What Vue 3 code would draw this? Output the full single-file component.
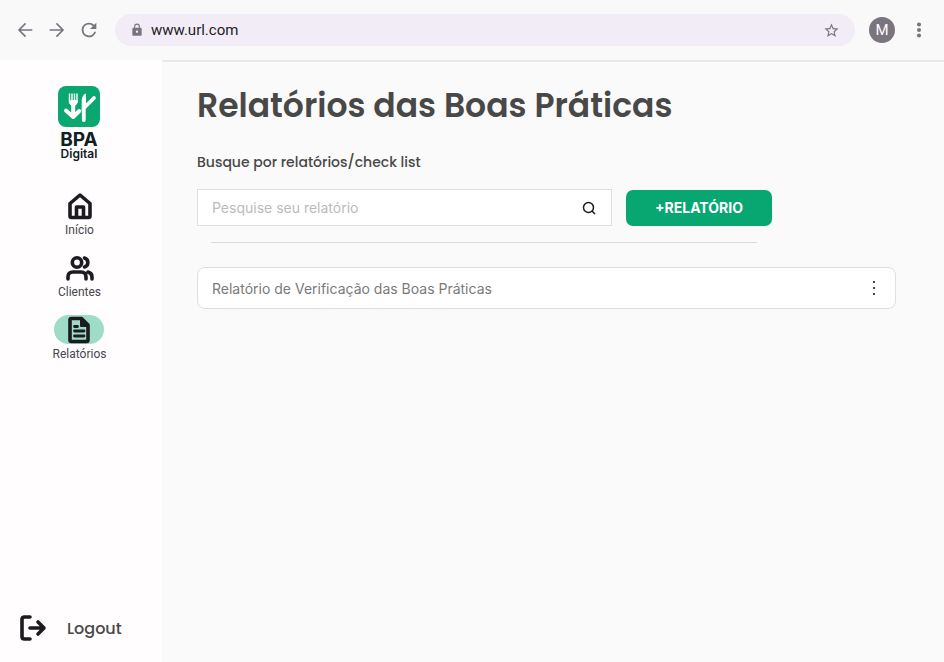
<script setup>
import { ref } from 'vue'

const url = ref('www.url.com')
const query = ref('')
const reports = ref(['Relatório de Verificação das Boas Práticas'])
</script>

<template>
  <div class="page">
    <header class="browser">
      <nav class="history" aria-label="Navegador">
        <button type="button" aria-label="Voltar">
          <svg width="22" height="22" viewBox="0 0 24 24"><path d="M20 11.200H7.500l5.700-5.700L12 4.200 4.200 12l7.800 7.800 1.200-1.300-5.700-5.700H20z" /></svg>
        </button>
        <button type="button" aria-label="Avançar">
          <svg width="22" height="22" viewBox="0 0 24 24"><path d="M4 11.200h12.500l-5.700-5.700L12 4.200l7.800 7.800-7.800 7.800-1.200-1.300 5.700-5.700H4z" /></svg>
        </button>
        <button type="button" aria-label="Recarregar">
          <svg width="22" height="22" viewBox="0 0 24 24"><path d="M17.65 6.35A7.96 7.96 0 0 0 12 4a8 8 0 1 0 7.73 10h-2.08A6 6 0 1 1 12 6c1.66 0 3.14.69 4.22 1.78L13 11h7V4z" /></svg>
        </button>
      </nav>
      <div class="address">
        <svg width="14" height="14" viewBox="0 0 24 24"><path d="M18 8h-1V6A5 5 0 0 0 7 6v2H6a2 2 0 0 0-2 2v10c0 1.100.9 2 2 2h12a2 2 0 0 0 2-2V10a2 2 0 0 0-2-2zm-6 9a2 2 0 1 1 0-4 2 2 0 0 1 0 4zM8.900 8V6a3.100 3.100 0 0 1 6.200 0v2z" /></svg>
        <input v-model="url" type="text" aria-label="Endereço" />
        <button type="button" aria-label="Favoritar">
          <svg width="17" height="17" viewBox="0 0 24 24"><path d="M22 9.240l-7.190-.62L12 2 9.190 8.630 2 9.240l5.460 4.730L5.820 21 12 17.270 18.180 21l-1.630-7.030zM12 15.400l-3.760 2.270 1-4.280-3.320-2.880 4.380-.38L12 6.100l1.710 4.040 4.380.38-3.320 2.880 1 4.280z" /></svg>
        </button>
      </div>
      <button type="button" class="avatar" aria-label="Perfil">M</button>
      <button type="button" aria-label="Menu">
        <svg width="22" height="22" viewBox="0 0 24 24"><circle cx="12" cy="6" r="2.200" /><circle cx="12" cy="12" r="2.200" /><circle cx="12" cy="18" r="2.200" /></svg>
      </button>
    </header>

    <div class="body">
      <aside class="sidebar">
        <div class="logo">
          <svg width="42" height="41" viewBox="0 0 42 41">
            <rect width="42" height="41" rx="8" fill="#0aa870" />
            <g fill="none" stroke="#fff" stroke-linecap="round" stroke-linejoin="round">
              <path d="M11.500 8v8M14 8v8M16.500 8v8M19 8v8" stroke-width="1.400" />
              <path d="M11.300 15c0 3 1.500 4.500 4 4.500s4-1.500 4-4.500z" fill="#fff" stroke-width="1" />
              <path d="M15.200 18v10M8 24.500l7.200 6.500 6-6" stroke-width="4" />
              <path d="M25.800 34V23M26 22L36 12" stroke-width="3.800" />
            </g>
            <path d="M23.700 25V15c0-4 1.500-6.500 4.300-7.500V22z" fill="#fff" />
          </svg>
          <strong>BPA</strong>
          <span>Digital</span>
        </div>

        <nav class="menu" aria-label="Principal">
          <a href="#inicio">
            <span class="badge">
              <svg width="28" height="28" viewBox="0 0 28 28"><path d="M4 11.500L14 3l10 8.500V24q0 1.500-1.500 1.500h-17Q4 25.500 4 24zM10.500 25V15h7v10" /></svg>
            </span>
            Início
          </a>
          <a href="#clientes">
            <span class="badge">
              <svg width="30" height="28" viewBox="0 0 30 28"><circle cx="12" cy="8.500" r="4.700" /><path d="M19.500 4a4.700 4.700 0 0 1 0 9M3 25v-2q0-5 5-5h8q5 0 5 5v2M23 18q4 1 4 5v2" /></svg>
            </span>
            Clientes
          </a>
          <a href="#relatorios" class="active" aria-current="page">
            <span class="badge">
              <svg width="28" height="28" viewBox="0 0 28 28"><path d="M6 2.500h10.500L23 9v15q0 1.500-1.500 1.500H6.500Q5 25.500 5 24V4q0-1.500 1.500-1.500z" /><path d="M16 2.500V10h7" fill="#1c1b1f" stroke-width="2" /><path d="M9.500 10.500h3M9.500 15h9.500M9.500 20h9.500" stroke-width="2.800" /></svg>
            </span>
            Relatórios
          </a>
        </nav>

        <a href="#logout" class="logout">
          <svg width="28" height="28" viewBox="0 0 28 28"><path d="M11 3H5.500Q3 3 3 5.500v17Q3 25 5.500 25H11M11 14h14M19 8l6 6-6 6" /></svg>
          Logout
        </a>
      </aside>

      <main>
        <h1>Relatórios das Boas Práticas</h1>
        <form @submit.prevent>
          <label for="search">Busque por relatórios/check list</label>
          <div class="search-row">
            <div class="search">
              <input id="search" v-model="query" type="text" placeholder="Pesquise seu relatório" />
              <button type="submit" aria-label="Buscar">
                <svg width="16" height="16" viewBox="0 0 16 16"><circle cx="7.500" cy="7.500" r="5" /><path d="M11 11l3 3" /></svg>
              </button>
            </div>
            <button type="button" class="add">+RELATÓRIO</button>
          </div>
        </form>
        <hr />
        <ul class="reports">
          <li v-for="report in reports" :key="report">
            <span>{{ report }}</span>
            <button type="button" aria-label="Opções">
              <svg width="16" height="18" viewBox="0 0 16 18"><path d="M7 2h2v2H7zM7 8h2v2H7zM7 14h2v2H7z" /></svg>
            </button>
          </li>
        </ul>
      </main>
    </div>
  </div>
</template>

<style>
body {
  background: #fafafa;
}
</style>

<style scoped>
* {
  box-sizing: border-box;
}

.page {
  display: flex;
  flex-direction: column;
  min-height: 100vh;
  font-family: Poppins, Inter, sans-serif;
  color: #484848;
}

button {
  display: flex;
  align-items: center;
  justify-content: center;
  padding: 0;
  border: 0;
  background: none;
  color: inherit;
  font: inherit;
  cursor: pointer;
}

input {
  flex: 1;
  min-width: 0;
  padding: 0;
  border: 0;
  outline: 0;
  background: none;
}

a {
  color: inherit;
  text-decoration: none;
}

svg {
  display: block;
  flex: none;
}

.browser {
  display: flex;
  align-items: center;
  height: 60px;
  padding: 0 14px;
  background: #f9f9f9;
  color: #79747e;
}

.browser svg {
  fill: currentColor;
}

.history {
  display: flex;
  gap: 10px;
  margin-right: 15px;
}

.address {
  display: flex;
  flex: 1;
  align-items: center;
  gap: 7px;
  height: 32px;
  margin-right: 14px;
  padding: 0 15px;
  border-radius: 16px;
  background: #f2ecf6;
}

.address input {
  color: #1c1b1f;
  font: 15px Roboto, sans-serif;
}

.avatar {
  width: 26px;
  height: 26px;
  margin-right: 13px;
  border-radius: 50%;
  background: #79747e;
  color: #fff;
  font: 15px Roboto, sans-serif;
}

.body {
  display: flex;
  flex: 1;
}

.sidebar {
  display: flex;
  flex: none;
  flex-direction: column;
  width: 162px;
  padding: 26px 0 20px;
  background: #fffdfe;
}

.logo {
  display: flex;
  flex-direction: column;
  align-items: center;
  padding-right: 4px;
  color: #10201e;
  font-family: Inter, sans-serif;
}

.logo strong {
  margin-top: 4px;
  font-size: 19px;
  font-weight: 700;
  line-height: 18px;
}

.logo span {
  font-size: 12px;
  font-weight: 600;
  line-height: 10px;
}

.menu {
  display: flex;
  flex-direction: column;
  align-items: center;
  gap: 15px;
  margin-top: 32px;
  padding-right: 3px;
}

.menu a {
  display: flex;
  flex-direction: column;
  align-items: center;
  gap: 2px;
  font: 400 12px/16px Roboto, sans-serif;
  color: #49454f;
}

.badge {
  display: flex;
  align-items: center;
  justify-content: center;
  width: 50px;
  height: 29px;
  border-radius: 15px;
}

.active .badge {
  background: #9edcc7;
}

.menu svg,
.logout svg {
  fill: none;
  stroke: #1c1b1f;
  stroke-width: 3.600;
  stroke-linecap: round;
  stroke-linejoin: round;
}

.logout {
  display: flex;
  align-items: center;
  gap: 20px;
  margin-top: auto;
  padding-left: 19px;
  font-size: 16px;
  font-weight: 500;
}

main {
  flex: 1;
  padding: 23px 48px 24px 35px;
  border-top: 2px solid #e8e8e8;
}

h1 {
  margin: 0;
  font-size: 33px;
  font-weight: 600;
  line-height: 42px;
}

form {
  display: flex;
  flex-direction: column;
  gap: 17px;
  margin-top: 25px;
}

label {
  font-size: 14px;
  font-weight: 500;
  line-height: 20px;
}

.search-row {
  display: flex;
  align-items: center;
  gap: 14px;
}

.search {
  display: flex;
  flex: 0 1 415px;
  align-items: center;
  height: 37px;
  padding: 0 14px;
  border: 1px solid #dfdfdf;
  background: #fff;
}

.search input {
  color: #484848;
  font: 400 14px Inter, sans-serif;
}

.search input::placeholder {
  color: #bbb;
  opacity: 1;
}

.search svg {
  fill: none;
  stroke: #1c1b1f;
  stroke-width: 1.500;
}

.add {
  flex: 0 0 146px;
  height: 36px;
  border-radius: 7px;
  background: #08a671;
  color: #fff;
  font: 700 14px Inter, sans-serif;
}

hr {
  max-width: 546px;
  height: 1px;
  margin: 16px 14px 0;
  border: 0;
  background: #dadada;
}

.reports {
  display: flex;
  flex-direction: column;
  gap: 12px;
  margin: 24px 0 0;
  padding: 0;
  list-style: none;
}

.reports li {
  display: flex;
  align-items: center;
  justify-content: space-between;
  height: 42px;
  padding: 0 13px 0 14px;
  border: 1px solid #dfdfdf;
  border-radius: 8px;
  background: #fff;
  color: #7a7a7a;
  font: 400 14px Inter, sans-serif;
}

.reports svg {
  fill: #484848;
}
</style>
